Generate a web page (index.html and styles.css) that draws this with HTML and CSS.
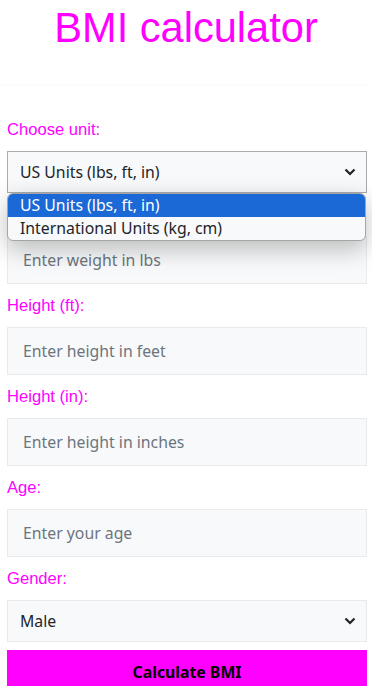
FILE: index.html
```html
<!DOCTYPE html>
<html lang="en">
<head>
    <meta charset="UTF-8">
    <meta name="viewport" content="width=device-width, initial-scale=1.0">
    <title>BMI calculator</title>
    <link rel="stylesheet" href="styles.css">
</head>
<body>
    <header class="header">
        <h1>BMI calculator</h1>
    </header>
    <main class="panel">
        <form class="bmi-form" onsubmit="return false">
            <label for="unit">Choose unit:</label>
            <div class="select-wrap">
                <select id="unit" class="field select open">
                    <option>US Units (lbs, ft, in)</option>
                    <option>International Units (kg, cm)</option>
                </select>
                <svg class="chevron" width="12" height="8" viewBox="0 0 12 8"><path d="M1.5 1.5 6 6l4.5-4.5" fill="none" stroke="#222" stroke-width="2.2"/></svg>
                <ul class="dropdown">
                    <li class="active">US Units (lbs, ft, in)</li>
                    <li>International Units (kg, cm)</li>
                </ul>
            </div>

            <label for="weight">Weight (lbs):</label>
            <input id="weight" class="field" type="number" placeholder="Enter weight in lbs">

            <label for="feet">Height (ft):</label>
            <input id="feet" class="field" type="number" placeholder="Enter height in feet">

            <label for="inches">Height (in):</label>
            <input id="inches" class="field" type="number" placeholder="Enter height in inches">

            <label for="age">Age:</label>
            <input id="age" class="field" type="number" placeholder="Enter your age">

            <label for="gender">Gender:</label>
            <div class="select-wrap">
                <select id="gender" class="field select">
                    <option>Male</option>
                    <option>Female</option>
                </select>
                <svg class="chevron" width="12" height="8" viewBox="0 0 12 8"><path d="M1.5 1.5 6 6l4.5-4.5" fill="none" stroke="#222" stroke-width="2.2"/></svg>
            </div>

            <button class="calc-btn" type="submit">Calculate BMI</button>
        </form>
    </main>
</body>
</html>
```

FILE: styles.css
```css
body {
    margin: 0;
    background: #fff;
    font-family: "Liberation Sans", Arial, sans-serif;
}
.header {
    height: 86px;
    text-align: center;
}
.header h1 {
    margin: 0;
    padding-top: 4px;
    font-size: 41.6px;
    font-weight: normal;
    line-height: normal;
    color: #f0f;
}
.panel {
    padding: 22px 5px 0 7px;
    box-shadow: 0 -1px 4px rgba(0,0,0,0.025);
}
.bmi-form label {
    display: block;
    margin: 12px 0;
    font-size: 16.6px;
    line-height: 19px;
    color: #f0f;
}
.field {
    display: block;
    box-sizing: border-box;
    width: 360px;
    height: 48px;
    margin: 0;
    padding: 0 15px;
    background: #f8f9fa;
    border: 1px solid #e9eaeb;
    border-radius: 0;
    font-family: "Noto Sans", "Open Sans", sans-serif;
    font-size: 15.8px;
    color: #212529;
    outline: none;
}
.field::placeholder {
    color: #6c757d;
}
.select-wrap {
    position: relative;
}
.select {
    height: 42px;
    padding: 0 12px;
    -webkit-appearance: none;
    appearance: none;
}
.select.open {
    border-color: #a9abae;
}
.chevron {
    position: absolute;
    right: 11px;
    top: 17px;
    pointer-events: none;
}
.dropdown {
    position: absolute;
    top: 42px;
    left: 0;
    width: 359px;
    box-sizing: border-box;
    margin: 0;
    padding: 0;
    list-style: none;
    background: #f8f9fa;
    border: 1px solid #a5a5a5;
    border-radius: 6px;
    overflow: hidden;
    box-shadow: 0 8px 24px rgba(0,0,0,0.26);
    font-family: "Noto Sans", "Open Sans", sans-serif;
    font-size: 15.8px;
    color: #212529;
    z-index: 2;
}
.dropdown li {
    height: 23px;
    line-height: 23px;
    padding: 0 12px;
}
.dropdown li.active {
    background: #1b69d6;
    color: #fff;
}
.calc-btn {
    display: block;
    width: 360px;
    height: 44px;
    margin-top: 8px;
    border: none;
    background: #f0f;
    color: #000;
    font-family: "Noto Sans", "Open Sans", sans-serif;
    font-size: 15.8px;
    font-weight: bold;
    cursor: pointer;
}
```
